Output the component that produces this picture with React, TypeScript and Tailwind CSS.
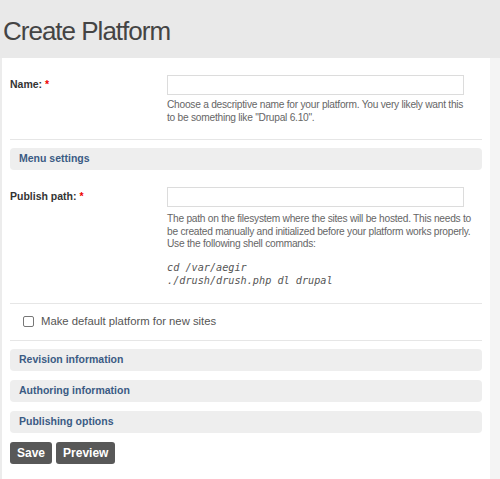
const sans = { fontFamily: '"Liberation Sans", Arial, sans-serif' }

function Bar({ title }: { title: string }) {
  return (
    <div className="h-[22px] rounded-[4px] bg-[#eeeeee] pl-[9px] flex items-center text-[10.5px] font-bold text-[#3b5b84]">
      {title}
    </div>
  )
}

function Field({
  label,
  children,
}: {
  label: string
  children: React.ReactNode
}) {
  return (
    <div className="flex">
      <div className="w-[157px] shrink-0 pt-[2px] text-[10.5px] font-bold text-[#333]">
        {label} <span className="text-[#e00]">*</span>
      </div>
      <div className="w-[297px]">
        <input
          type="text"
          className="block w-full h-[20px] border border-[#dcdcdc] bg-white outline-none"
        />
        {children}
      </div>
    </div>
  )
}

export default function App() {
  return (
    <div
      className="w-[500px] h-[479px] overflow-hidden bg-[#e9e9e9] flex flex-col"
      style={sans}
    >
      {/* Header */}
      <div className="h-[58px] shrink-0 pl-[3px] pt-[15px]">
        <h1 className="text-[26px] leading-[32px] tracking-[-1px] text-[#444]">
          Create Platform
        </h1>
      </div>

      <div className="flex flex-1">
        <div className="w-[2px] shrink-0 bg-[#ececec]" />
        <div className="w-[488px] shrink-0 bg-white px-[8px] pt-[17px]">
          <Field label="Name:">
            <p className="mt-[3px] w-[310px] text-[10.2px] leading-[13px] tracking-[-0.25px] text-[#666]">
              Choose a descriptive name for your platform. You very likely want this
              <br />
              to be something like "Drupal 6.10".
            </p>
          </Field>

          <div className="h-px bg-[#e6e6e6] mt-[15px] mb-[8px]" />
          <Bar title="Menu settings" />

          <div className="mt-[17px]">
            <Field label="Publish path:">
              <p className="mt-[6px] w-[310px] text-[10.2px] leading-[12.5px] tracking-[-0.25px] text-[#666]">
                The path on the filesystem where the sites will be hosted. This needs to
                <br />
                be created manually and initialized before your platform works properly.
                <br />
                Use the following shell commands:
              </p>
              <pre
                className="mt-[10px] text-[10.2px] leading-[13px] italic text-[#555]"
                style={{ fontFamily: '"DejaVu Sans Mono", monospace' }}
              >
                {'cd /var/aegir\n./drush/drush.php dl drupal'}
              </pre>
            </Field>
          </div>

          <div className="h-px bg-[#e6e6e6] mt-[16px]" />
          <label className="flex items-center h-[36px] pl-[13px] gap-[7px] text-[11.3px] text-[#555]">
            <span className="w-[11px] h-[11px] border border-[#777] rounded-[2px] bg-white" />
            Make default platform for new sites
          </label>
          <div className="h-px bg-[#e6e6e6] mb-[8px]" />

          <div className="flex flex-col gap-[9px]">
            <Bar title="Revision information" />
            <Bar title="Authoring information" />
            <Bar title="Publishing options" />
          </div>

          <div className="flex gap-[4px] mt-[9px]">
            <button className="h-[22px] px-[7px] rounded-[3px] bg-[#585858] text-white text-[12px] font-bold">
              Save
            </button>
            <button className="h-[22px] px-[7px] rounded-[3px] bg-[#585858] text-white text-[12px] font-bold">
              Preview
            </button>
          </div>
        </div>
        <div className="flex-1 bg-[#f4f4f4]" />
      </div>
    </div>
  )
}
